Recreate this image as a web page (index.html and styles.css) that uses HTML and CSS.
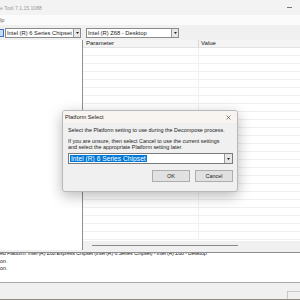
FILE: index.html
```html
<!doctype html>
<html lang="en">

<head>
    <meta charset="utf-8">
    <meta name="viewport" content="width=device-width, initial-scale=1">
    <title>Platform Select</title>

    <link rel="stylesheet" href="styles.css">

</head>

<body>
    <div class="window">
        <div class="titlebar">
            <span class="title">e Tool 7.1.15.1088</span>
            <span class="minimize"></span>
        </div>
        <div class="menubar"><span>lp</span></div>
        <div class="toolbar">
            <span class="tb-icon"></span>
            <div class="combo chipset">
                <span class="combo-text">Intel (R) 6 Series Chipset</span>
                <span class="drop"><svg width="3" height="2" viewBox="0 0 3 2"><path d="M0 0H3L1.5 2Z" fill="#222"/></svg></span>
            </div>
            <div class="combo platform">
                <span class="combo-text">Intel (R) Z68 - Desktop</span>
                <span class="drop"><svg width="3" height="2" viewBox="0 0 3 2"><path d="M0 0H3L1.5 2Z" fill="#222"/></svg></span>
            </div>
        </div>

        <div class="main">
            <div class="tree"></div>
            <div class="listpane">
                <div class="list" id="list">
                    <div class="row head">
                        <div class="col-param">Parameter</div>
                        <div class="col-value">Value</div>
                    </div>
                </div>
                <div class="hscroll"><div class="thumb"></div></div>
            </div>
        </div>

        <div class="splitter"></div>

        <div class="output">
            <div class="log cut">ed Platform: Intel (R) Z68 Express Chipset (Intel (R) 6 Series Chipset) - Intel (R) Z68 - Desktop</div>
            <div class="log">on.</div>
            <div class="log">on.</div>
        </div>

        <div class="statusbar"><div class="panel"></div></div>
        <div class="desktop"></div>
    </div>

    <div class="dialog">
        <div class="dlg-title">
            <span>Platform Select</span>
            <svg class="close" width="5" height="5" viewBox="0 0 5 5"><path d="M0.5 0.5L4.5 4.5M4.5 0.5L0.5 4.5" stroke="#333" stroke-width="0.6"/></svg>
        </div>
        <div class="dlg-body">
            <p class="msg">Select the Platform setting to use during the Decompose process.</p>
            <p class="msg second">If you are unsure, then select Cancel to use the current settings<br>and select the appropriate Platform setting later.</p>
            <div class="dlg-combo">
                <span class="selected">Intel (R) 6 Series Chipset</span>
                <span class="drop"><svg width="3" height="2" viewBox="0 0 3 2"><path d="M0 0H3L1.5 2Z" fill="#222"/></svg></span>
            </div>
            <div class="buttons">
                <button class="btn">OK</button>
                <button class="btn">Cancel</button>
            </div>
        </div>
    </div>

    <script>
        // fill the list view with empty rows
        const list = document.getElementById("list");
        for (let i = 0; i < 24; i++) {
            const row = document.createElement("div");
            row.className = "row";
            row.innerHTML = '<div class="col-param"></div><div class="col-value"></div>';
            list.appendChild(row);
        }
    </script>
</body>

</html>
```

FILE: styles.css
```css
body {
    margin: 0;
    width: 300px;
    height: 300px;
    overflow: hidden;
    font-family: "Liberation Sans", Arial, sans-serif;
    font-size: 5.4px;
    color: #1a1a1a;
    background-color: #ffffff;
}

.window {
    width: 300px;
    height: 300px;
    display: flex;
    flex-direction: column;
}

.titlebar {
    height: 15px;
    background-color: #f3f3f3;
    display: flex;
    align-items: center;
    justify-content: space-between;
    color: #9a9a9a;
    font-size: 5.1px;
}

.minimize {
    width: 5px;
    height: 1px;
    background-color: #777;
    margin-right: 8px;
}

.menubar {
    height: 10px;
    background-color: #fbfbfb;
    display: flex;
    align-items: center;
    color: #666;
    font-size: 5.8px;
}

.toolbar {
    height: 15px;
    background-color: #f0f0f0;
    display: flex;
    align-items: center;
    gap: 1px;
}

.tb-icon {
    width: 3px;
    height: 6px;
    border: 1px solid #3c6fd0;
    border-left: none;
    background-color: #c9dcf6;
}

.combo {
    height: 10px;
    box-sizing: border-box;
    border: 1px solid #8a8a8a;
    background-color: #fff;
    display: flex;
    align-items: center;
    justify-content: space-between;
    font-size: 5.8px;
    overflow: hidden;
}

.combo-text {
    padding-left: 1px;
    white-space: nowrap;
}

.chipset {
    width: 76px;
    margin-right: 4px;
}

.platform {
    width: 93px;
}

.drop {
    flex-shrink: 0;
    width: 7px;
    height: 8px;
    box-sizing: border-box;
    border-left: 1px solid #9a9a9a;
    background-color: #e6e6e6;
    display: flex;
    align-items: center;
    justify-content: center;
}

.main {
    height: 210px;
    display: flex;
}

.tree {
    width: 82px;
    background-color: #fff;
    border-right: 1px solid #8f8f8f;
}

.listpane {
    flex: 1;
    display: flex;
    flex-direction: column;
}

.list {
    flex: 1;
    overflow: hidden;
}

.row {
    height: 8px;
    box-sizing: border-box;
    display: flex;
    border-bottom: 1px solid #f0f0f0;
}

.row.head {
    background-color: #f4f4f4;
    border-bottom: 1px solid #e2e2e2;
    font-size: 6px;
}

.col-param {
    width: 116px;
    padding-left: 3px;
    box-sizing: border-box;
    border-right: 1px solid #f0f0f0;
    line-height: 7px;
}

.row.head .col-param {
    border-right: 1px solid #d8d8d8;
}

.col-value {
    flex: 1;
    padding-left: 2px;
    line-height: 7px;
}

.hscroll {
    height: 9px;
    background-color: #f0f0f0;
    display: flex;
    align-items: center;
    padding-left: 9px;
}

.thumb {
    width: 146px;
    height: 1px;
    background-color: #8a8a8a;
}

.splitter {
    height: 2px;
    background-color: #f0f0f0;
    border-bottom: 1px solid #8c8c8c;
}

.output {
    height: 29px;
    background-color: #fff;
    overflow: hidden;
    border-bottom: 1px solid #a8a8a8;
}

.log {
    height: 7.5px;
    line-height: 7.5px;
    white-space: nowrap;
}

.log.cut {
    margin-top: -3px;
    letter-spacing: -0.2px;
}

.statusbar {
    flex: 1;
    background-color: #f0f0f0;
    display: flex;
    justify-content: flex-end;
    align-items: flex-end;
}

.panel {
    width: 12px;
    height: 7px;
    border-top: 1px solid #c8c8c8;
    border-left: 1px solid #c8c8c8;
}

.desktop {
    height: 1px;
    background-color: #8f8a84;
}

/* modal dialog floating over the main window */
.dialog {
    position: absolute;
    left: 62px;
    top: 110px;
    width: 176px;
    height: 82px;
    box-sizing: border-box;
    border: 1px solid #b9b9b9;
    border-radius: 3px;
    background-color: #f0f0f0;
    box-shadow: 0 4px 14px rgba(0, 0, 0, 0.28);
    overflow: hidden;
}

.dlg-title {
    height: 12px;
    background-color: #f8f4f0;
    display: flex;
    align-items: center;
    justify-content: space-between;
    padding: 0 6px 0 2px;
    color: #222;
    font-size: 5.7px;
}

.dlg-body {
    padding: 4px 4px 0 5px;
}

.msg {
    margin: 0;
    line-height: 6px;
}

.msg.second {
    margin-top: 5px;
}

.dlg-combo {
    margin-top: 3px;
    height: 11px;
    box-sizing: border-box;
    border: 1px solid #7a7a7a;
    background-color: #fff;
    display: flex;
    align-items: center;
    justify-content: space-between;
    padding-left: 1px;
    font-size: 6.7px;
}

.selected {
    background-color: #0078d7;
    color: #fff;
    padding: 0 1px;
    line-height: 7px;
}

.dlg-combo .drop {
    height: 9px;
    width: 8px;
}

.buttons {
    display: flex;
    justify-content: flex-end;
    gap: 5px;
    margin-top: 6px;
}

.btn {
    width: 38px;
    height: 12px;
    padding: 0;
    font-family: "Liberation Sans", Arial, sans-serif;
    font-size: 5.5px;
    color: #222;
    background-color: #e1e1e1;
    border: 1px solid #adadad;
}
```
